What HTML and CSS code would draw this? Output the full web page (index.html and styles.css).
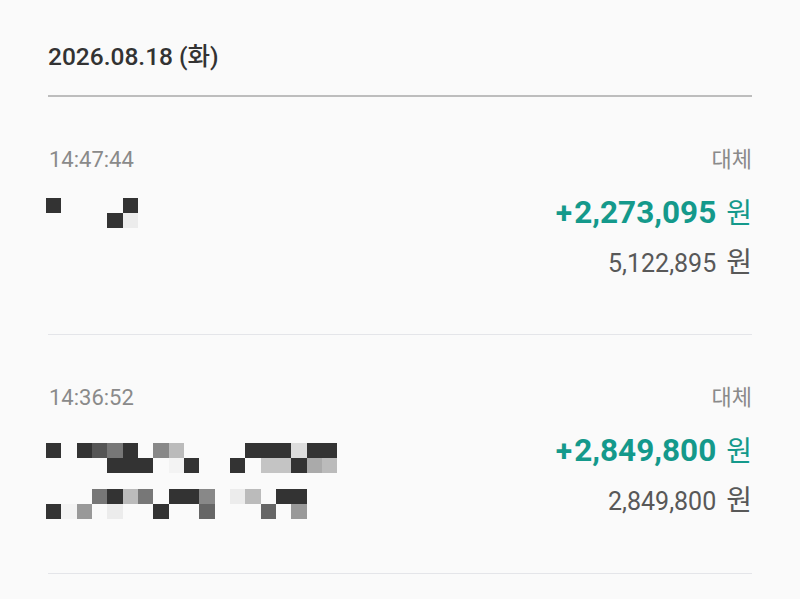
FILE: index.html
```html
<!DOCTYPE html>
<html lang="ko">
<head>
<meta charset="utf-8">
<title>거래내역</title>
<link rel="stylesheet" href="styles.css">
</head>
<body>

<div class="history">
<!-- 날짜 헤더 -->
<div class="day-head">2026.08.18 (화)</div>

<!-- 거래 1 -->
<div class="tx">
<div class="tx-left">
<div class="tx-time">14:47:44</div>
<div class="pix" data-rows="k....k|....ke"></div>
</div>
<div class="tx-right">
<div class="tx-type">대체</div>
<div class="tx-amount"><span class="sign">+</span><span class="num">2,273,095</span><span class="won">원</span></div>
<div class="tx-balance"><span class="num">5,122,895</span><span class="won">원</span></div>
</div>
</div>

<!-- 거래 2 -->
<div class="tx">
<div class="tx-left">
<div class="tx-time">14:36:52</div>
<div class="pix two" data-rows="k.k57k.8b....kkkdkk|....kkk.fk..k.cckab"></div>
<div class="pix" data-rows="...7kb7.kk8.eb.kk|kf9.e..k..6...6.9"></div>
</div>
<div class="tx-right">
<div class="tx-type">대체</div>
<div class="tx-amount"><span class="sign">+</span><span class="num">2,849,800</span><span class="won">원</span></div>
<div class="tx-balance"><span class="num">2,849,800</span><span class="won">원</span></div>
</div>
</div>
</div>

<script>
// 이름 모자이크 칸 그리기
document.querySelectorAll('.pix').forEach(box => {
box.dataset.rows.split('|').forEach(line => {
const row = document.createElement('div');
row.className = 'pix-row';
for (const ch of line) {
const cell = document.createElement('span');
if (ch !== '.') cell.className = 'c-' + ch;
row.appendChild(cell);
}
box.appendChild(row);
});
});
</script>
</body>
</html>
```

FILE: styles.css
```css
:root {
--teal: #14998b;
--text: #333;
--sub: #8a8a8a;
--line: #e4e5e9;
}

* {
margin: 0;
padding: 0;
box-sizing: border-box;
}

body {
background: #fafafa;
font-family: Roboto, "Noto Sans CJK KR", sans-serif;
color: var(--text);
}

.history {
padding: 0 48px;
}

/* 날짜 헤더 */
.day-head {
padding: 42px 0 23px;
font-size: 24.5px;
line-height: 30px;
font-weight: 500;
color: #333;
border-bottom: 2px solid #bdbdbd;
}

/* 거래 행 */
.tx {
display: flex;
justify-content: space-between;
padding: 49px 0 54px;
border-bottom: 1px solid var(--line);
}

.tx-time,
.tx-type {
font-size: 22px;
line-height: 28px;
color: var(--sub);
}

.tx-time {
margin-left: 1px;
}

.tx-right {
display: flex;
flex-direction: column;
align-items: flex-end;
}

.tx-amount {
margin-top: 19px;
line-height: 40px;
color: var(--teal);
display: flex;
align-items: baseline;
}

.tx-amount .sign {
font-size: 30px;
font-weight: 700;
margin-right: 2px;
}

.tx-amount .num {
font-size: 31.5px;
font-weight: 700;
}

.tx-amount .won {
font-size: 28px;
margin-left: 10px;
}

.tx-balance {
margin-top: 13px;
line-height: 32px;
color: #585858;
display: flex;
align-items: baseline;
}

.tx-balance .num {
font-size: 25px;
}

.tx-balance .won {
font-size: 28px;
margin-left: 10px;
}

/* 이름 모자이크 */
.pix {
margin: 24px 0 0 -2px;
}

.pix.two {
margin-top: 31px;
}

.pix + .pix {
margin-top: 16px;
}

.pix-row {
display: flex;
}

.pix-row span {
width: 15.33px;
height: 15px;
}

.c-k { background: #333; }
.c-5 { background: #555; }
.c-6 { background: #666; }
.c-7 { background: #777; }
.c-8 { background: #888; }
.c-9 { background: #999; }
.c-a { background: #aaa; }
.c-b { background: #bbb; }
.c-c { background: #c4c4c4; }
.c-d { background: #ddd; }
.c-e { background: #ececec; }
.c-f { background: #f3f3f3; }
```
